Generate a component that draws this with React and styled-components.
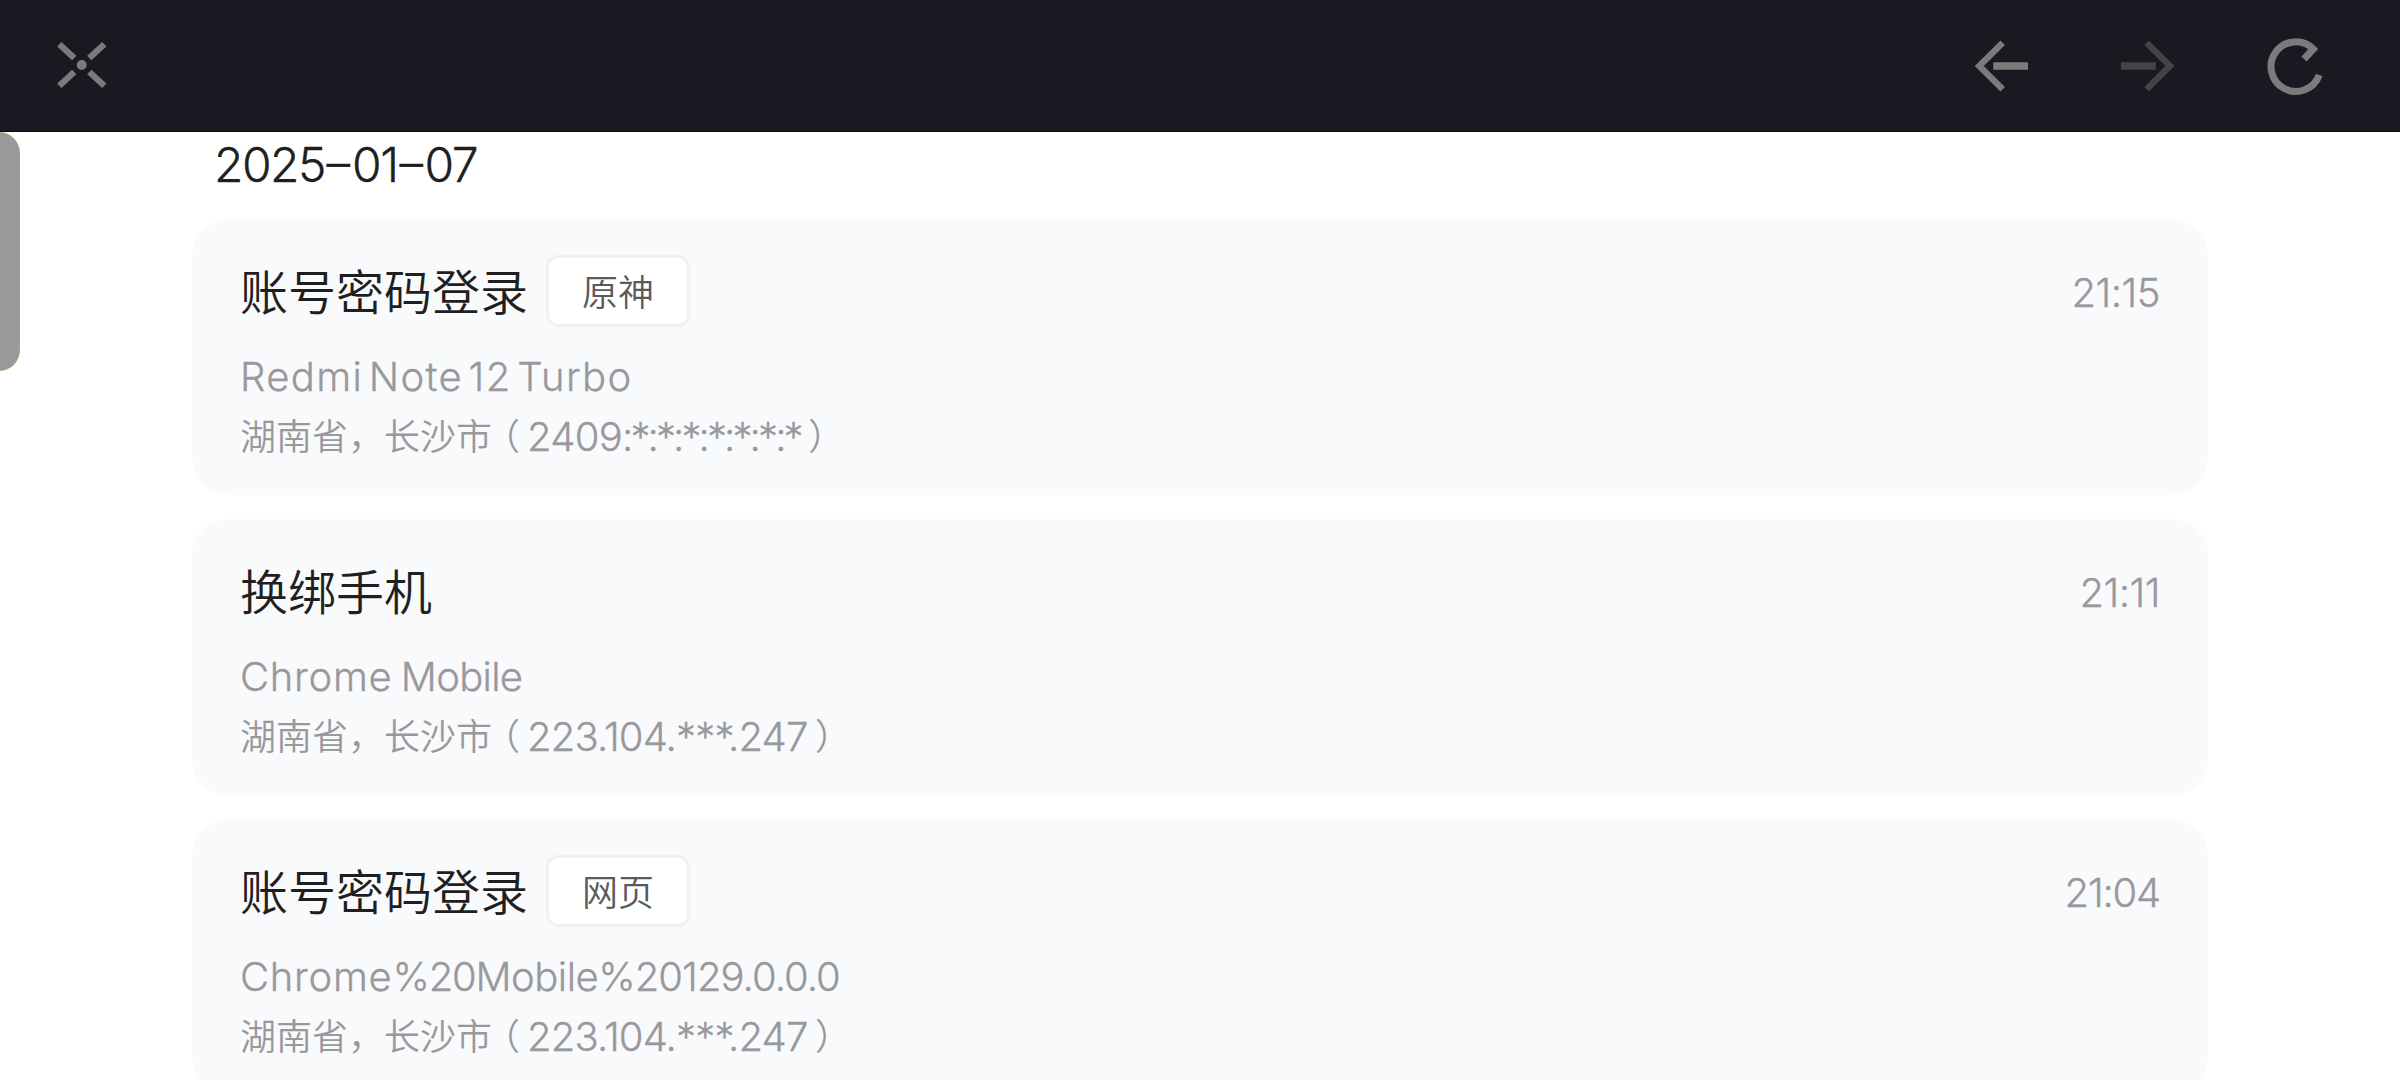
import React from "react";
import styled, { createGlobalStyle } from "styled-components";

const GlobalStyle = createGlobalStyle`
  html, body { margin: 0; padding: 0; background: #fff; }
  body { overflow: hidden; }
  * { box-sizing: border-box; }
`;

const Page = styled.div`
  position: relative;
  width: 2400px;
  height: 1080px;
  overflow: hidden;
  display: flex;
  flex-direction: column;
  background: #fff;
  font-family: Inter, "Noto Sans CJK SC", sans-serif;
  font-weight: 300;
`;

const TopBar = styled.header`
  flex: none;
  height: 132px;
  display: flex;
  align-items: center;
  justify-content: space-between;
  padding: 0 63px 1px 42px;
  background: #191922;
  border-bottom: 1px solid #0b0b18;
`;

const NavGroup = styled.nav`
  display: flex;
  gap: 67px;
`;

const IconButton = styled.button`
  display: flex;
  padding: 0;
  border: 0;
  background: none;
  color: ${(p) => (p.$dim ? "#444446" : "#7b7b7b")};
`;

const Icon = styled.svg`
  display: block;
  width: 80px;
  height: 80px;
  fill: none;
  stroke: currentColor;
`;

const SideHandle = styled.div`
  position: absolute;
  left: -1px;
  top: 132px;
  width: 21px;
  height: 239px;
  border: 1px solid #8db36f;
  border-radius: 0 21px 21px 0;
  background: #999;
`;

const Main = styled.main`
  flex: 1;
  padding: 0 192px;
`;

const DateHeading = styled.h2`
  margin: 0;
  height: 87px;
  padding: 0 22px;
  line-height: 66px;
  font-size: 48px;
  font-weight: 300;
  letter-spacing: ${(p) => p.$tracking}px;
  -webkit-text-stroke: 0.3px currentColor;
  color: #1f1f21;
`;

const Dash = styled.span`
  display: inline-block;
  width: 27px;
  text-align: center;
  letter-spacing: 0;
  transform: translateY(-2px) scaleX(1.6);
`;

const List = styled.ul`
  margin: 0;
  padding: 0;
  list-style: none;
  display: flex;
  flex-direction: column;
  gap: 24px;
`;

const Card = styled.li`
  height: 276px;
  padding: 36px 48px 0;
  border-radius: 36px;
  background: #f9fafc;
`;

const CardHead = styled.div`
  display: flex;
  align-items: center;
  height: 72px;
  margin-bottom: 20px;
`;

const Title = styled.h3`
  margin: 0 18px 0 0;
  font-family: "Noto Sans CJK SC", sans-serif;
  font-size: 48px;
  line-height: 68px;
  padding-bottom: 4px;
  font-weight: 350;
  color: #1f1f21;
`;

const Tag = styled.span`
  width: 144px;
  height: 72px;
  border: 3px solid #f0f1f4;
  border-radius: 12px;
  background: #fff;
  text-align: center;
  font-family: "Noto Sans CJK SC", sans-serif;
  font-size: 36px;
  font-weight: 350;
  line-height: 64px;
  color: #5a5a5e;
`;

const Latin = styled.span`
  font-size: 40px;
  letter-spacing: ${(p) => p.$tracking || 0}px;
  word-spacing: ${(p) => p.$wordGap || 0}px;
  -webkit-text-stroke: 0.3px currentColor;
  white-space: pre;
`;

const Time = styled.time`
  margin-left: auto;
  padding-top: 3px;
  color: #98989d;
`;

const Line = styled.div`
  display: flex;
  height: 60px;
  line-height: 60px;
  color: #98989d;
`;

const Place = styled.span`
  font-family: "Noto Sans CJK SC", sans-serif;
  font-size: 36px;
  font-weight: 350;
  line-height: 54px;
  white-space: pre;
`;

const Paren = styled(Place)`
  width: ${(p) => p.$width || 36}px;
  text-align: center;
  text-indent: ${(p) => p.$shift}px;
  font-feature-settings: "halt";
`;

const phoneIp = [{ text: "223.104.***.247", tracking: -0.85 }];

const records = [
  {
    title: "账号密码登录", tag: "原神", time: "21:15", timeTracking: -0.5,
    device: [{ text: "Redmi Note 12 Turbo", tracking: 1.35, wordGap: -7 }],
    ip: [{ text: "2409", tracking: -0.7 }, { text: ":*:*:*:*:*:*:*", tracking: -2.9 }],
  },
  {
    title: "换绑手机", time: "21:11", timeTracking: -0.5,
    device: [{ text: "Chrome ", tracking: 0.7, wordGap: -3.5 }, { text: "Mobile", tracking: -0.7 }],
    ip: phoneIp,
  },
  {
    title: "账号密码登录", tag: "网页", time: "21:04", timeTracking: -1.2,
    device: [
      { text: "Chrome", tracking: 0.7 },
      { text: "%20", tracking: -1.2 },
      { text: "Mobile", tracking: -0.5 },
      { text: "%20129.0.0.0", tracking: -0.95 },
    ],
    ip: phoneIp,
  },
];

function CloseIcon() {
  return (
    <Icon viewBox="42 25 80 80" strokeWidth="6.3">
      <path d="M59.3 44.2 74.2 58M104.3 44.2 89.3 58M59.3 85.8 74.2 72M104.3 85.8 89.3 72" />
      <circle cx="81.7" cy="65" r="5" fill="currentColor" stroke="none" />
    </Icon>
  );
}

function BackIcon() {
  return (
    <Icon viewBox="1963 25 80 80">
      <path strokeWidth="6.4" d="M2002.7 42.8 1979.3 66 2002.7 89.2" />
      <path strokeWidth="7.3" d="M1993.3 66H2028" />
    </Icon>
  );
}

function ForwardIcon() {
  return (
    <Icon viewBox="2110 25 80 80">
      <path strokeWidth="6.4" d="M2146.5 42.8 2169.9 66 2146.5 89.2" />
      <path strokeWidth="7.3" d="M2121 66H2155.7" />
    </Icon>
  );
}

function ReloadIcon() {
  return (
    <Icon viewBox="2257 25 80 80" strokeWidth="7">
      <path d="M2319.2 75A24.8 24.8 0 1 1 2313.3 49L2304 59" />
    </Icon>
  );
}

function Runs({ runs }) {
  return runs.map((run, i) => (
    <Latin key={i} $tracking={run.tracking} $wordGap={run.wordGap}>{run.text}</Latin>
  ));
}

function Record({ item }) {
  return (
    <Card>
      <CardHead>
        <Title>{item.title}</Title>
        {item.tag && <Tag>{item.tag}</Tag>}
        <Time>
          <Latin $tracking={item.timeTracking}>{item.time}</Latin>
        </Time>
      </CardHead>
      <Line>
        <Runs runs={item.device} />
      </Line>
      <Line>
        <Place>湖南省，长沙市</Place>
        <Paren $width={35} $shift={3}>（</Paren>
        <Runs runs={item.ip} />
        <Paren $shift={-3}>）</Paren>
      </Line>
    </Card>
  );
}

export default function App() {
  return (
    <Page>
      <GlobalStyle />
      <TopBar>
        <IconButton aria-label="关闭"><CloseIcon /></IconButton>
        <NavGroup>
          <IconButton aria-label="后退"><BackIcon /></IconButton>
          <IconButton aria-label="前进" $dim><ForwardIcon /></IconButton>
          <IconButton aria-label="刷新"><ReloadIcon /></IconButton>
        </NavGroup>
      </TopBar>
      <SideHandle />
      <Main>
        <DateHeading $tracking={-1.5}>
          2025<Dash>-</Dash>01<Dash>-</Dash>07
        </DateHeading>
        <List>
          {records.map((item) => (
            <Record key={item.time} item={item} />
          ))}
        </List>
      </Main>
    </Page>
  );
}
